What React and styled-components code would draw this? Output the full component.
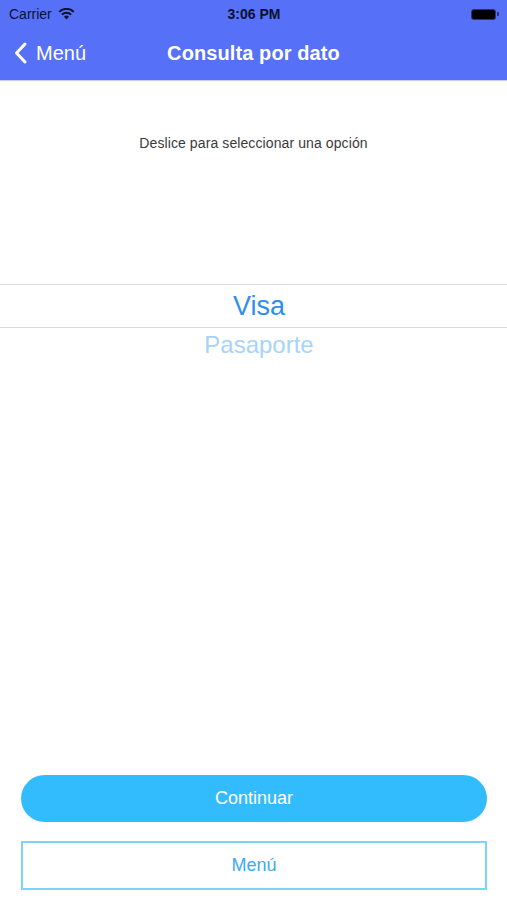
import styled, { createGlobalStyle } from 'styled-components';

const GlobalStyle = createGlobalStyle`
  html, body {
    margin: 0;
    padding: 0;
    background: #ffffff;
  }
  body {
    font-family: "Liberation Sans", Arial, sans-serif;
  }
`;

const Screen = styled.div`
  width: 507px;
  height: 900px;
  display: flex;
  flex-direction: column;
  background: #ffffff;
  overflow: hidden;
`;

const Header = styled.header`
  background: #5670f7;
  border-bottom: 1px solid #c8cffa;
  color: #ffffff;
`;

const StatusBar = styled.div`
  height: 28px;
  display: grid;
  grid-template-columns: 1fr auto 1fr;
  align-items: center;
  padding: 0 8px 0 9px;
  font-size: 14px;
  color: #0b1230;
`;

const Carrier = styled.div`
  display: flex;
  align-items: center;
  gap: 6px;
`;

const Clock = styled.div`
  font-weight: 700;
  font-size: 14px;
`;

const Battery = styled.div`
  justify-self: end;
  display: flex;
  align-items: center;
  gap: 1px;
`;

const BatteryBody = styled.div`
  width: 25px;
  height: 11px;
  border-radius: 3px;
  background: #000000;
  border: 1px solid #2a3470;
  box-sizing: border-box;
`;

const BatteryTip = styled.div`
  width: 2px;
  height: 4px;
  border-radius: 0 1px 1px 0;
  background: #2a3470;
`;

const NavBar = styled.nav`
  height: 50px;
  display: grid;
  grid-template-columns: 1fr auto 1fr;
  align-items: center;
  padding: 0 14px 2px;
`;

const BackButton = styled.div`
  display: flex;
  align-items: center;
  gap: 9px;
  font-size: 20px;
  color: #ffffff;
`;

const Title = styled.h1`
  margin: 0;
  font-size: 20px;
  font-weight: 700;
  letter-spacing: 0.1px;
`;

const Body = styled.main`
  flex: 1;
  display: flex;
  flex-direction: column;
`;

const Hint = styled.p`
  margin: 54px 0 0;
  text-align: center;
  font-size: 14px;
  letter-spacing: 0.1px;
  color: #3a3a3a;
`;

const Picker = styled.div`
  margin-top: 133px;
  display: flex;
  flex-direction: column;
  align-items: center;
`;

const Selected = styled.div`
  width: 100%;
  height: 44px;
  box-sizing: border-box;
  padding-left: 11px;
  border-top: 1px solid #d9d9d9;
  border-bottom: 1px solid #d9d9d9;
  display: flex;
  align-items: center;
  justify-content: center;
  font-size: 27px;
  color: #2f8ff0;
`;

const Option = styled.div`
  padding-left: 11px;
  font-size: 24px;
  line-height: 34px;
  color: #a8d3fb;
`;

const Actions = styled.div`
  margin-top: auto;
  padding: 0 20px 10px 21px;
  display: flex;
  flex-direction: column;
  gap: 19px;
`;

const Button = styled.button`
  height: ${({ $outline }) => ($outline ? '49px' : '47px')};
  border-radius: ${({ $outline }) => ($outline ? '0' : '24px')};
  border: ${({ $outline }) => ($outline ? '2px solid #7fd3fb' : 'none')};
  background: ${({ $outline }) => ($outline ? '#ffffff' : '#33bcfd')};
  color: ${({ $outline }) => ($outline ? '#3aaaf4' : '#ffffff')};
  font-family: inherit;
  font-size: 18px;
  cursor: pointer;
`;

const WifiIcon = () => (
  <svg width="17" height="12" viewBox="0 0 17 12">
    <path d="M8.5 11.5 L6 8.8 A3.6 3.6 0 0 1 11 8.8 Z" fill="#0b1230" />
    <path d="M3.9 6.6 A6.5 6.5 0 0 1 13.1 6.6" stroke="#0b1230" strokeWidth="2" fill="none" />
    <path d="M1.2 3.9 A10.3 10.3 0 0 1 15.8 3.9" stroke="#0b1230" strokeWidth="2" fill="none" />
  </svg>
);

const Chevron = () => (
  <svg width="13" height="22" viewBox="0 0 13 22">
    <path d="M11 2 L2.5 11 L11 20" stroke="#ffffff" strokeWidth="3" fill="none" strokeLinecap="round" strokeLinejoin="round" />
  </svg>
);

const App = () => (
  <>
    <GlobalStyle />
    <Screen>
      <Header>
        <StatusBar>
          <Carrier>
            Carrier
            <WifiIcon />
          </Carrier>
          <Clock>3:06 PM</Clock>
          <Battery>
            <BatteryBody />
            <BatteryTip />
          </Battery>
        </StatusBar>
        <NavBar>
          <BackButton>
            <Chevron />
            Menú
          </BackButton>
          <Title>Consulta por dato</Title>
          <div />
        </NavBar>
      </Header>
      <Body>
        <Hint>Deslice para seleccionar una opción</Hint>
        <Picker>
          <Selected>Visa</Selected>
          <Option>Pasaporte</Option>
        </Picker>
        <Actions>
          <Button>Continuar</Button>
          <Button $outline>Menú</Button>
        </Actions>
      </Body>
    </Screen>
  </>
);

export default App;
